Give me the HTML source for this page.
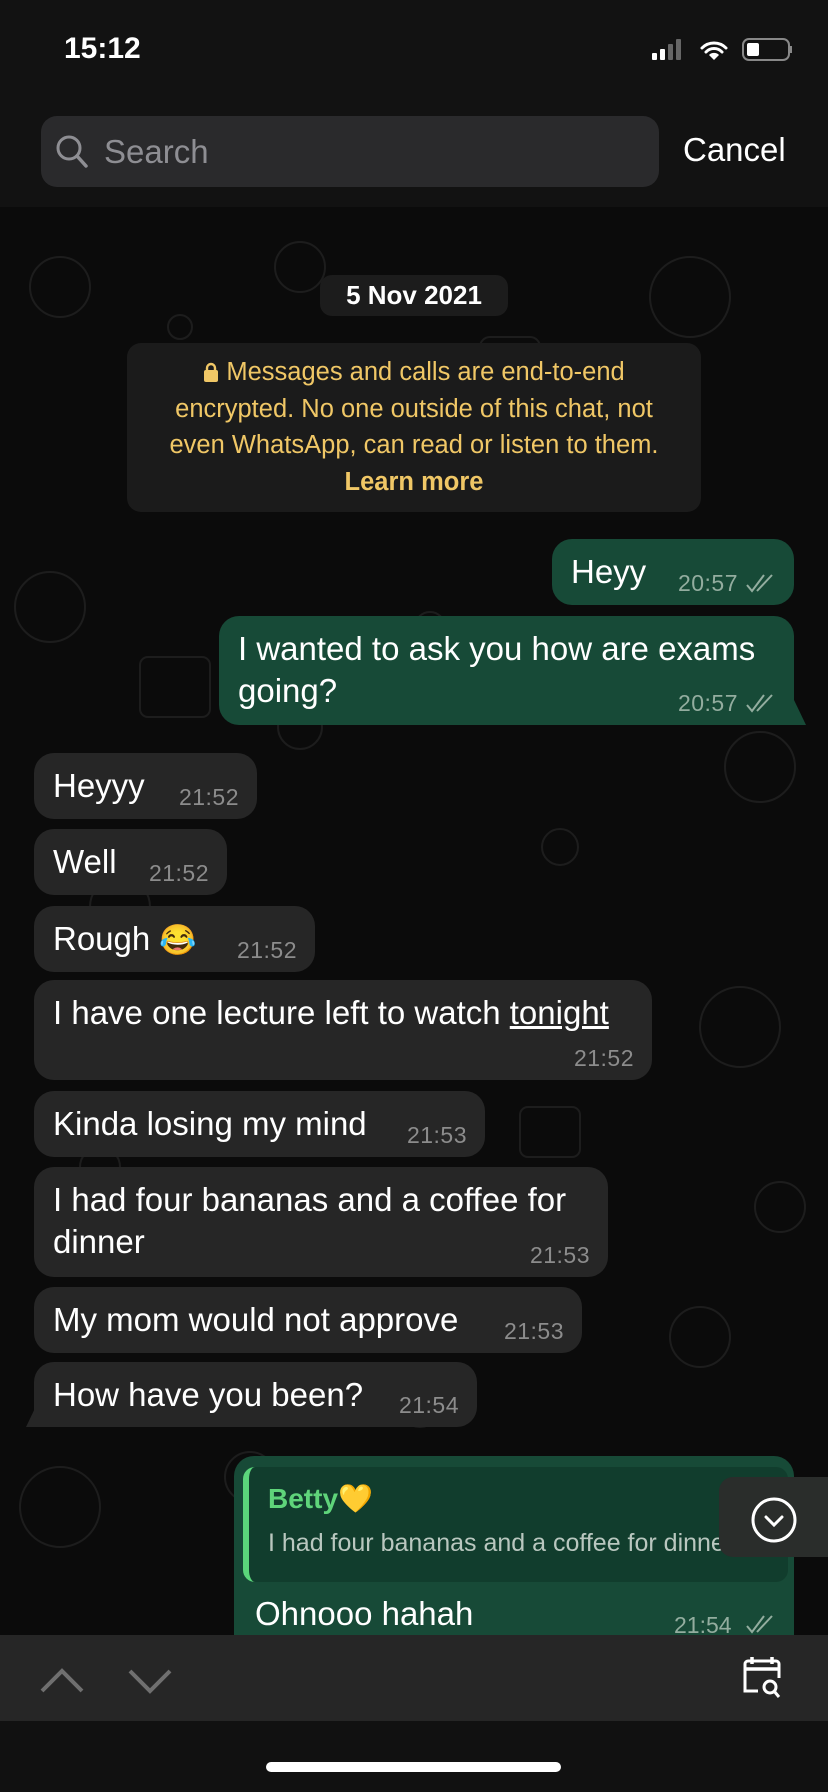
<!DOCTYPE html>
<html><head><meta charset="utf-8"><style>
*{margin:0;padding:0;box-sizing:border-box}
body{width:828px;height:1792px;background:#0b0b0b;font-family:"Liberation Sans",sans-serif;position:relative;overflow:hidden;color:#fff}
.abs{position:absolute}
.hdr{left:0;top:0;width:828px;height:207px;background:#121212}
.b{position:absolute;border-radius:20px;font-size:33px;line-height:42px;padding:12px 19px;white-space:nowrap}
.in{background:#262626;left:34px}
.out{background:#174a37}
.t{position:absolute;bottom:10px;font-size:23px;color:#8c8c8c;line-height:24px;letter-spacing:0.5px}
.out .t{color:#93ad9f;right:56px}
.in .t{right:18px}
.ck{position:absolute;right:17px;bottom:12px}
</style></head><body>
<svg class="abs" style="left:0;top:207px" width="828" height="1428" opacity="0.07">
<g fill="none" stroke="#fff" stroke-width="2">
<circle cx="60" cy="80" r="30"/><circle cx="300" cy="60" r="25"/><rect x="480" y="130" width="60" height="40" rx="10"/><circle cx="690" cy="90" r="40"/><circle cx="50" cy="400" r="35"/><rect x="140" y="450" width="70" height="60" rx="8"/><circle cx="300" cy="520" r="22"/><circle cx="760" cy="560" r="35"/><circle cx="430" cy="420" r="15"/><rect x="600" y="430" width="50" height="60" rx="10"/><circle cx="120" cy="700" r="30"/><circle cx="740" cy="820" r="40"/><circle cx="700" cy="1130" r="30"/><circle cx="60" cy="1300" r="40"/><rect x="520" y="900" width="60" height="50" rx="8"/><circle cx="780" cy="1000" r="25"/><circle cx="100" cy="960" r="20"/><circle cx="660" cy="250" r="20"/><circle cx="250" cy="1270" r="25"/><circle cx="180" cy="120" r="12"/><circle cx="560" cy="640" r="18"/><circle cx="420" cy="1200" r="20"/>
</g></svg>
<div class="abs hdr"></div>
<div class="abs" style="left:64px;top:29px;font-size:30px;font-weight:bold;line-height:40px">15:12</div>
<svg class="abs" style="left:652px;top:37px" width="140" height="28">
<rect x="0" y="16" width="5" height="7" rx="1" fill="#fff"/><rect x="8" y="12" width="5" height="11" rx="1" fill="#fff"/><rect x="16" y="7" width="5" height="16" rx="1" fill="#666"/><rect x="24" y="2" width="5" height="21" rx="1" fill="#666"/>
<path d="M50 11a17 17 0 0 1 24 0M54 15a11 11 0 0 1 16 0" stroke="#fff" stroke-width="3" fill="none" stroke-linecap="round"/><path d="M57 18l5 5 5-5a7 7 0 0 0-10 0z" fill="#fff"/>
<rect x="91" y="2" width="46" height="21" rx="6" fill="none" stroke="#888" stroke-width="2"/><rect x="95" y="6" width="12" height="13" rx="2" fill="#fff"/><rect x="138" y="9" width="2" height="7" fill="#888"/>
</svg>
<div class="abs" style="left:41px;top:116px;width:618px;height:71px;background:#2a2a2c;border-radius:16px"></div>
<svg class="abs" style="left:54px;top:133px" width="36" height="38"><circle cx="15" cy="15" r="11" stroke="#8e8e93" stroke-width="3" fill="none"/><path d="M23 23l9 10" stroke="#8e8e93" stroke-width="3.5" stroke-linecap="round"/></svg>
<div class="abs" style="left:104px;top:132px;font-size:33px;color:#8e8e93;line-height:40px">Search</div>
<div class="abs" style="left:683px;top:130px;font-size:33px;line-height:40px">Cancel</div>
<div class="abs" style="left:320px;top:275px;width:188px;height:41px;background:#1c1c1c;border-radius:12px;text-align:center;font-size:26px;font-weight:bold;line-height:41px">5 Nov 2021</div>
<div class="abs" style="left:127px;top:343px;width:574px;height:169px;background:#1b1b1b;border-radius:14px;color:#f0c766;text-align:center;font-size:25.5px;line-height:36.5px;padding-top:11px;white-space:nowrap">
<svg width="16" height="20" style="vertical-align:-2px"><rect x="1" y="8" width="14" height="12" rx="2" fill="#f0c766"/><path d="M4 9V6a4 4 0 0 1 8 0v3" stroke="#f0c766" stroke-width="2.4" fill="none"/></svg> Messages and calls are end-to-end<br>encrypted. No one outside of this chat, not<br>even WhatsApp, can read or listen to them.<br><b>Learn more</b></div>

<div class="b out" style="left:552px;top:539px;width:242px;height:66px">Heyy<span class="t">20:57</span><svg class="ck" width="32" height="20"><path d="M2 12l5 6L19 2M12 18L27 2" stroke="#93ad9f" stroke-width="2" fill="none"/></svg></div>
<div class="b out" style="left:219px;top:616px;width:575px;height:109px;border-bottom-right-radius:4px">I wanted to ask you how are exams<br>going?<span class="t">20:57</span><svg class="ck" width="32" height="20"><path d="M2 12l5 6L19 2M12 18L27 2" stroke="#93ad9f" stroke-width="2" fill="none"/></svg></div>
<svg class="abs" style="left:790px;top:700px" width="20" height="25"><path d="M0 0h4l12 25H0z" fill="#174a37"/></svg>

<div class="b in" style="top:753px;width:223px;height:66px">Heyyy<span class="t">21:52</span></div>
<div class="b in" style="top:829px;width:193px;height:66px">Well<span class="t">21:52</span></div>
<div class="b in" style="top:906px;width:281px;height:66px">Rough <span style="font-size:30px">😂</span><span class="t">21:52</span></div>
<div class="b in" style="top:980px;width:618px;height:100px">I have one lecture left to watch <span style="text-decoration:underline">tonight</span><span class="t">21:52</span></div>
<div class="b in" style="top:1091px;width:451px;height:66px">Kinda losing my mind<span class="t">21:53</span></div>
<div class="b in" style="top:1167px;width:574px;height:110px">I had four bananas and a coffee for<br>dinner<span class="t">21:53</span></div>
<div class="b in" style="top:1287px;width:548px;height:66px">My mom would not approve<span class="t">21:53</span></div>
<div class="b in" style="top:1362px;width:443px;height:65px;border-bottom-left-radius:4px">How have you been?<span class="t">21:54</span></div>
<svg class="abs" style="left:22px;top:1402px" width="20" height="25"><path d="M20 0h-4L4 25h16z" fill="#262626"/></svg>

<div class="abs" style="left:234px;top:1456px;width:560px;height:200px;background:#174a37;border-radius:20px"></div>
<div class="abs" style="left:243px;top:1467px;width:545px;height:115px;background:#113d2d;border-radius:12px;overflow:hidden;border-left:6px solid #5bd67b">
<div style="position:absolute;left:19px;top:14px;font-size:28px;font-weight:bold;color:#5fd47a;line-height:36px">Betty💛</div>
<div style="position:absolute;left:19px;top:60px;font-size:25px;color:#b9c7bf;white-space:nowrap;line-height:32px">I had four bananas and a coffee for dinner</div></div>
<div class="abs" style="left:255px;top:1594px;font-size:33px;line-height:40px">Ohnooo hahah</div>
<div class="abs" style="left:674px;top:1612px;font-size:23px;color:#93ad9f">21:54</div>
<svg class="abs" style="left:745px;top:1614px" width="32" height="20"><path d="M2 12l5 6L19 2M12 18L27 2" stroke="#93ad9f" stroke-width="2" fill="none"/></svg>
<div class="abs" style="left:719px;top:1477px;width:115px;height:80px;background:#2a2d2b;border-radius:14px 0 0 14px"></div>
<svg class="abs" style="left:750px;top:1496px" width="48" height="48"><circle cx="24" cy="24" r="21" stroke="#fff" stroke-width="3" fill="none"/><path d="M16 21l8 8 8-8" stroke="#fff" stroke-width="3" fill="none" stroke-linecap="round"/></svg>

<div class="abs" style="left:0;top:1635px;width:828px;height:86px;background:#262626"></div>
<div class="abs" style="left:0;top:1721px;width:828px;height:71px;background:#111"></div>
<svg class="abs" style="left:38px;top:1665px" width="140" height="30"><path d="M4 26L24 6l20 20" stroke="#6f6f6f" stroke-width="4" fill="none"/><path d="M92 6l20 20 20-20" stroke="#6f6f6f" stroke-width="4" fill="none"/></svg>
<svg class="abs" style="left:740px;top:1654px" width="44" height="46"><path d="M18 37H5V10a3 3 0 0 1 3-3h28a3 3 0 0 1 3 3v14" stroke="#fff" stroke-width="3" fill="none"/><path d="M5 15h34M12 3v7M32 3v7" stroke="#fff" stroke-width="3.5"/><circle cx="30" cy="33" r="6" stroke="#fff" stroke-width="3" fill="none"/><path d="M34 37l5 6" stroke="#fff" stroke-width="3"/></svg>
<div class="abs" style="left:266px;top:1762px;width:295px;height:10px;background:#fff;border-radius:5px"></div>
</body></html>
